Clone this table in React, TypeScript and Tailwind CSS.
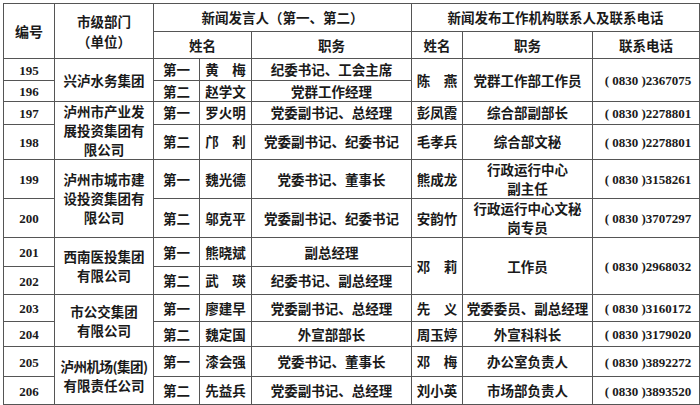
import React from "react";

const B = "border border-[#555]";
const cjk = { fontFamily: '"Noto Sans CJK SC", "Noto Sans", sans-serif' };
const serif = { fontFamily: '"Liberation Serif", serif' };

function Num({ n }: { n: string }) {
  return (
    <span className="font-bold text-[13px]" style={serif}>
      {n}
    </span>
  );
}

function Phone({ n }: { n: string }) {
  return (
    <span className="whitespace-pre text-[13px] font-bold" style={serif}>
      {`( 0830 )${n}`}
    </span>
  );
}

type Row = {
  no: string;
  h: string;
  dept?: { text: React.ReactNode; span: number };
  ord: string;
  name: string;
  duty: React.ReactNode;
  contact?: { name: string; duty: React.ReactNode; phone: string; span: number };
};

const rows: Row[] = [
  {
    no: "195",
    h: "h-[22px]",
    dept: { text: "兴泸水务集团", span: 2 },
    ord: "第一",
    name: "黄　梅",
    duty: "纪委书记、工会主席",
    contact: { name: "陈　燕", duty: "党群工作部工作员", phone: "2367075", span: 2 },
  },
  { no: "196", h: "h-[20px]", ord: "第二", name: "赵学文", duty: "党群工作经理" },
  {
    no: "197",
    h: "h-[22px]",
    dept: {
      text: (
        <>
          泸州市产业发
          <br />
          展投资集团有
          <br />
          限公司
        </>
      ),
      span: 2,
    },
    ord: "第一",
    name: "罗火明",
    duty: "党委副书记、总经理",
    contact: { name: "彭凤霞", duty: "综合部副部长", phone: "2278801", span: 1 },
  },
  {
    no: "198",
    h: "h-[34px]",
    ord: "第二",
    name: "邝　利",
    duty: "党委副书记、纪委书记",
    contact: { name: "毛孝兵", duty: "综合部文秘", phone: "2278801", span: 1 },
  },
  {
    no: "199",
    h: "h-[39px]",
    dept: {
      text: (
        <>
          泸州市城市建
          <br />
          设投资集团有
          <br />
          限公司
        </>
      ),
      span: 2,
    },
    ord: "第一",
    name: "魏光德",
    duty: "党委书记、董事长",
    contact: {
      name: "熊成龙",
      duty: (
        <>
          行政运行中心
          <br />
          副主任
        </>
      ),
      phone: "3158261",
      span: 1,
    },
  },
  {
    no: "200",
    h: "h-[38px]",
    ord: "第二",
    name: "邬克平",
    duty: "党委副书记、纪委书记",
    contact: {
      name: "安韵竹",
      duty: (
        <>
          行政运行中心文秘
          <br />
          岗专员
        </>
      ),
      phone: "3707297",
      span: 1,
    },
  },
  {
    no: "201",
    h: "h-[29px]",
    dept: {
      text: (
        <>
          西南医投集团
          <br />
          有限公司
        </>
      ),
      span: 2,
    },
    ord: "第一",
    name: "熊晓斌",
    duty: "副总经理",
    contact: { name: "邓　莉", duty: "工作员", phone: "2968032", span: 2 },
  },
  { no: "202", h: "h-[28px]", ord: "第二", name: "武　瑛", duty: "纪委书记、副总经理" },
  {
    no: "203",
    h: "h-[27px]",
    dept: {
      text: (
        <>
          市公交集团
          <br />
          有限公司
        </>
      ),
      span: 2,
    },
    ord: "第一",
    name: "廖建早",
    duty: "党委副书记、总经理",
    contact: { name: "先　义", duty: "党委委员、副总经理", phone: "3160172", span: 1 },
  },
  {
    no: "204",
    h: "h-[25px]",
    ord: "第二",
    name: "魏定国",
    duty: "外宣部部长",
    contact: { name: "周玉婷", duty: "外宣科科长", phone: "3179020", span: 1 },
  },
  {
    no: "205",
    h: "h-[30px]",
    dept: {
      text: (
        <>
          <span className="whitespace-nowrap tracking-[-0.5px]">泸州机场(集团)</span>
          <br />
          有限责任公司
        </>
      ),
      span: 2,
    },
    ord: "第一",
    name: "漆会强",
    duty: "党委书记、董事长",
    contact: { name: "邓　梅", duty: "办公室负责人", phone: "3892272", span: 1 },
  },
  {
    no: "206",
    h: "h-[28px]",
    ord: "第二",
    name: "先益兵",
    duty: "党委副书记、总经理",
    contact: { name: "刘小英", duty: "市场部负责人", phone: "3893520", span: 1 },
  },
];

export default function App() {
  return (
    <div className="w-[700px] h-[405px] bg-white pl-[3px] pt-[3px] overflow-hidden">
      <table
        className="border-collapse table-fixed w-[696px] text-[13.5px] font-bold text-[#1a1a1a] leading-[19px] text-center"
        style={cjk}
      >
        <colgroup>
          <col className="w-[51px]" />
          <col className="w-[99px]" />
          <col className="w-[46px]" />
          <col className="w-[52px]" />
          <col className="w-[160px]" />
          <col className="w-[51px]" />
          <col className="w-[130px]" />
          <col className="w-[107px]" />
        </colgroup>
        <tbody>
          <tr className="h-[28px]">
            <td rowSpan={2} className={`${B} p-0 text-[14px]`}>编号</td>
            <td rowSpan={2} className={`${B} p-0 leading-[20px]`}>
              市级部门
              <br />
              （单位）
            </td>
            <td colSpan={3} className={`${B} p-0`}>新闻发言人（第一、第二）</td>
            <td colSpan={3} className={`${B} p-0`}>新闻发布工作机构联系人及联系电话</td>
          </tr>
          <tr className="h-[27px]">
            <td colSpan={2} className={`${B} p-0`}>姓名</td>
            <td className={`${B} p-0`}>职务</td>
            <td className={`${B} p-0`}>姓名</td>
            <td className={`${B} p-0`}>职务</td>
            <td className={`${B} p-0`}>联系电话</td>
          </tr>
          {rows.map((r) => (
            <tr key={r.no} className={r.h}>
              <td className={`${B} p-0`}>
                <Num n={r.no} />
              </td>
              {r.dept && (
                <td rowSpan={r.dept.span} className={`${B} p-0`}>
                  {r.dept.text}
                </td>
              )}
              <td className={`${B} p-0`}>{r.ord}</td>
              <td className={`${B} p-0 whitespace-nowrap`}>{r.name}</td>
              <td className={`${B} p-0 whitespace-nowrap`}>{r.duty}</td>
              {r.contact && (
                <>
                  <td rowSpan={r.contact.span} className={`${B} p-0 whitespace-nowrap`}>
                    {r.contact.name}
                  </td>
                  <td rowSpan={r.contact.span} className={`${B} p-0 whitespace-nowrap`}>
                    {r.contact.duty}
                  </td>
                  <td rowSpan={r.contact.span} className={`${B} p-0 pl-[4px]`}>
                    <Phone n={r.contact.phone} />
                  </td>
                </>
              )}
            </tr>
          ))}
        </tbody>
      </table>
    </div>
  );
}
